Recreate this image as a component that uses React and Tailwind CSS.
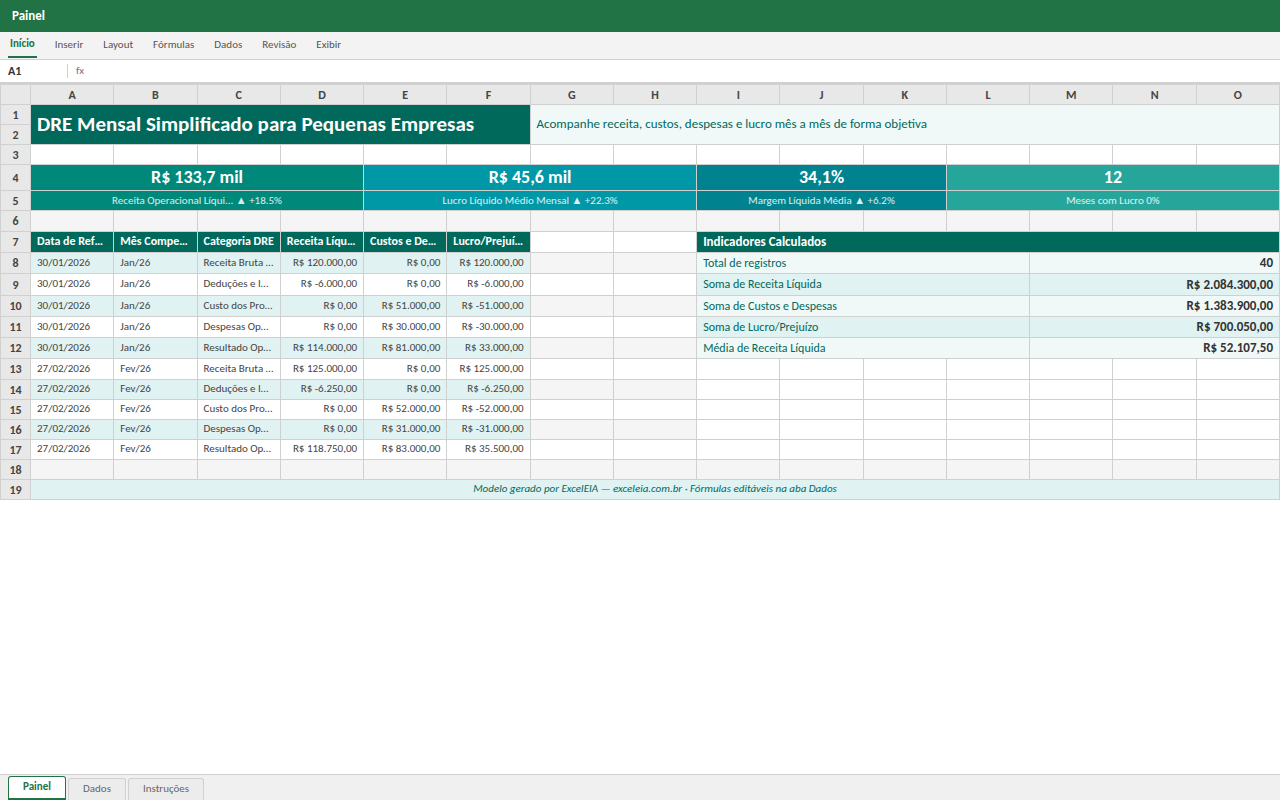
import React from 'react';

const columns = ['A', 'B', 'C', 'D', 'E', 'F', 'G', 'H', 'I', 'J', 'K', 'L', 'M', 'N', 'O'];

const menu = ['Início', 'Inserir', 'Layout', 'Fórmulas', 'Dados', 'Revisão', 'Exibir'];

const kpis = [
  { value: 'R$ 133,7 mil', label: 'Receita Operacional Líqui... ▲ +18.5%', span: 4, bg: 'bg-[#00897b]' },
  { value: 'R$ 45,6 mil', label: 'Lucro Líquido Médio Mensal ▲ +22.3%', span: 4, bg: 'bg-[#0097a7]' },
  { value: '34,1%', label: 'Margem Líquida Média ▲ +6.2%', span: 3, bg: 'bg-[#00838f]' },
  { value: '12', label: 'Meses com Lucro 0%', span: 4, bg: 'bg-[#26a69a]' },
];

const headers = ['Data de Referência', 'Mês Competência', 'Categoria DRE', 'Receita Líquida', 'Custos e Despesas', 'Lucro/Prejuízo'];

const rows = [
  { n: 8, h: 'h-[21px]', bg: 'bg-[#e0f2f1]', side: 'bg-[#f5f5f5]', d: ['30/01/2026', 'Jan/26', 'Receita Bruta de Vendas', 'R$ 120.000,00', 'R$ 0,00', 'R$ 120.000,00'] },
  { n: 9, h: 'h-[22px]', bg: 'bg-white', side: 'bg-white', d: ['30/01/2026', 'Jan/26', 'Deduções e Impostos', 'R$ -6.000,00', 'R$ 0,00', 'R$ -6.000,00'] },
  { n: 10, h: 'h-[21px]', bg: 'bg-[#e0f2f1]', side: 'bg-[#f5f5f5]', d: ['30/01/2026', 'Jan/26', 'Custo dos Produtos', 'R$ 0,00', 'R$ 51.000,00', 'R$ -51.000,00'] },
  { n: 11, h: 'h-[21px]', bg: 'bg-white', side: 'bg-white', d: ['30/01/2026', 'Jan/26', 'Despesas Operacionais', 'R$ 0,00', 'R$ 30.000,00', 'R$ -30.000,00'] },
  { n: 12, h: 'h-[21px]', bg: 'bg-[#e0f2f1]', side: 'bg-[#f5f5f5]', d: ['30/01/2026', 'Jan/26', 'Resultado Operacional', 'R$ 114.000,00', 'R$ 81.000,00', 'R$ 33.000,00'] },
  { n: 13, h: 'h-[21px]', bg: 'bg-white', side: 'bg-white', d: ['27/02/2026', 'Fev/26', 'Receita Bruta de Vendas', 'R$ 125.000,00', 'R$ 0,00', 'R$ 125.000,00'] },
  { n: 14, h: 'h-[20px]', bg: 'bg-[#e0f2f1]', side: 'bg-[#f5f5f5]', d: ['27/02/2026', 'Fev/26', 'Deduções e Impostos', 'R$ -6.250,00', 'R$ 0,00', 'R$ -6.250,00'] },
  { n: 15, h: 'h-[20px]', bg: 'bg-white', side: 'bg-white', d: ['27/02/2026', 'Fev/26', 'Custo dos Produtos', 'R$ 0,00', 'R$ 52.000,00', 'R$ -52.000,00'] },
  { n: 16, h: 'h-[20px]', bg: 'bg-[#e0f2f1]', side: 'bg-[#f5f5f5]', d: ['27/02/2026', 'Fev/26', 'Despesas Operacionais', 'R$ 0,00', 'R$ 31.000,00', 'R$ -31.000,00'] },
  { n: 17, h: 'h-[20px]', bg: 'bg-white', side: 'bg-white', d: ['27/02/2026', 'Fev/26', 'Resultado Operacional', 'R$ 118.750,00', 'R$ 83.000,00', 'R$ 35.500,00'] },
];

const indicators = [
  { label: 'Total de registros', value: '40', bg: 'bg-[#f0f9f8]' },
  { label: 'Soma de Receita Líquida', value: 'R$ 2.084.300,00', bg: 'bg-[#e0f2f1]' },
  { label: 'Soma de Custos e Despesas', value: 'R$ 1.383.900,00', bg: 'bg-[#f0f9f8]' },
  { label: 'Soma de Lucro/Prejuízo', value: 'R$ 700.050,00', bg: 'bg-[#e0f2f1]' },
  { label: 'Média de Receita Líquida', value: 'R$ 52.107,50', bg: 'bg-[#f0f9f8]' },
];

const cell = 'border border-[#d0d0d0] overflow-hidden whitespace-nowrap leading-[normal]';
const rowHead = 'border border-[#d0d0d0] bg-[#e8e8e8] p-0 text-center text-xs leading-[normal] font-bold text-[#444]';

function Empty({ bg = 'bg-white', count = 1 }) {
  return Array.from({ length: count }, (_, i) => <td key={i} className={`${cell} ${bg} p-0`} />);
}

function App() {
  return (
    <div className="flex h-[800px] w-[1280px] flex-col overflow-hidden bg-white font-['Carlito','Calibri','Lato',sans-serif]">
      <div className="flex h-8 shrink-0 items-center bg-[#217346] px-3 text-[13px] font-bold text-white">Painel</div>

      <div className="flex h-7 shrink-0 items-stretch gap-4 border-b border-[#d0d0d0] bg-[#f3f3f3] px-2">
        {menu.map((item, i) => (
          <div
            key={item}
            className={
              i === 0
                ? 'flex h-[26px] items-center border-b-2 border-[#217346] px-0.5 text-[11px] font-bold text-[#217346]'
                : 'flex h-[26px] items-center px-0.5 text-[11px] text-[#555]'
            }
          >
            {item}
          </div>
        ))}
      </div>

      <div className="flex h-6 shrink-0 items-center border-b-2 border-[#d0d0d0] bg-white">
        <div className="w-[68px] border-r border-[#d0d0d0] pl-2 text-xs leading-[14px] font-bold text-[#333]">A1</div>
        <div className="pl-2 text-[11px] text-[#777]">fx</div>
      </div>

      <div className="flex-1 overflow-hidden">
        <table className="w-[1280px] table-fixed border-collapse">
          <colgroup>
            <col className="w-[30px]" />
            {columns.map(c => <col key={c} />)}
          </colgroup>
          <thead>
            <tr className="h-5">
              <th className={rowHead} />
              {columns.map(c => <th key={c} className={rowHead}>{c}</th>)}
            </tr>
          </thead>
          <tbody>
            <tr className="h-5">
              <td className={rowHead}>1</td>
              <td colSpan={6} rowSpan={2} className={`${cell} bg-[#00695c] px-1.5 pb-0.5 text-[21px] font-bold text-white`}>
                DRE Mensal Simplificado para Pequenas Empresas
              </td>
              <td colSpan={9} rowSpan={2} className={`${cell} bg-[#f0f9f8] px-1.5 pb-0.5 text-[13px] text-[#00695c]`}>
                Acompanhe receita, custos, despesas e lucro mês a mês de forma objetiva
              </td>
            </tr>
            <tr className="h-5"><td className={rowHead}>2</td></tr>
            <tr className="h-5"><td className={rowHead}>3</td><Empty count={15} /></tr>
            <tr className="h-[26px]">
              <td className={rowHead}>4</td>
              {kpis.map(k => (
                <td key={k.label} colSpan={k.span} className={`${cell} ${k.bg} pb-0.5 text-center text-lg font-bold text-white`}>{k.value}</td>
              ))}
            </tr>
            <tr className="h-5">
              <td className={rowHead}>5</td>
              {kpis.map(k => (
                <td key={k.label} colSpan={k.span} className={`${cell} ${k.bg} p-0 text-center text-[11px] text-white/85`}>{k.label}</td>
              ))}
            </tr>
            <tr className="h-[21px]"><td className={rowHead}>6</td><Empty bg="bg-[#f5f5f5]" count={15} /></tr>
            <tr className="h-[21px]">
              <td className={rowHead}>7</td>
              {headers.map(h => (
                <td key={h} className={`${cell} bg-[#00695c] px-1.5 pb-0.5 text-xs font-bold text-ellipsis text-white`}>{h}</td>
              ))}
              <Empty count={2} />
              <td colSpan={7} className={`${cell} bg-[#00695c] px-1.5 pb-0.5 text-[13px] font-bold text-white`}>Indicadores Calculados</td>
            </tr>
            {rows.map((r, idx) => {
              const ind = indicators[idx];
              return (
                <tr key={r.n} className={r.h}>
                  <td className={rowHead}>{r.n}</td>
                  {r.d.map((v, i) => (
                    <td key={i} className={`${cell} ${r.bg} px-1.5 pb-0.5 text-[11px] text-ellipsis text-[#444] ${i > 2 ? 'text-right' : ''}`}>{v}</td>
                  ))}
                  <Empty bg={r.side} count={2} />
                  {ind ? (
                    <>
                      <td colSpan={4} className={`${cell} ${ind.bg} px-1.5 pb-px text-xs text-[#00695c]`}>{ind.label}</td>
                      <td colSpan={3} className={`${cell} ${ind.bg} px-1.5 pb-px text-right text-[13px] font-bold text-[#333]`}>{ind.value}</td>
                    </>
                  ) : (
                    <Empty count={7} />
                  )}
                </tr>
              );
            })}
            <tr className="h-5"><td className={rowHead}>18</td><Empty bg="bg-[#f5f5f5]" count={15} /></tr>
            <tr className="h-5">
              <td className={rowHead}>19</td>
              <td colSpan={15} className={`${cell} bg-[#e0f2f1] pb-0.5 text-center text-[11px] text-[#00695c] italic`}>
                Modelo gerado por ExcelEIA — exceleia.com.br · Fórmulas editáveis na aba Dados
              </td>
            </tr>
          </tbody>
        </table>
      </div>

      <div className="flex h-[26px] shrink-0 items-end gap-0.5 border-t border-[#d0d0d0] bg-[#f0f0f0] pl-2">
        <div className="flex h-[24px] w-[58px] items-center justify-center rounded-t-[3px] border border-b-2 border-[#217346] bg-white text-[11px] font-bold text-[#217346]">Painel</div>
        <div className="flex h-[22px] w-[58px] items-center justify-center rounded-t-[3px] border border-b-0 border-[#d0d0d0] bg-[#ececec] text-[11px] text-[#666]">Dados</div>
        <div className="flex h-[22px] w-[76px] items-center justify-center rounded-t-[3px] border border-b-0 border-[#d0d0d0] bg-[#ececec] text-[11px] text-[#666]">Instruções</div>
      </div>
    </div>
  );
}

export default App;
